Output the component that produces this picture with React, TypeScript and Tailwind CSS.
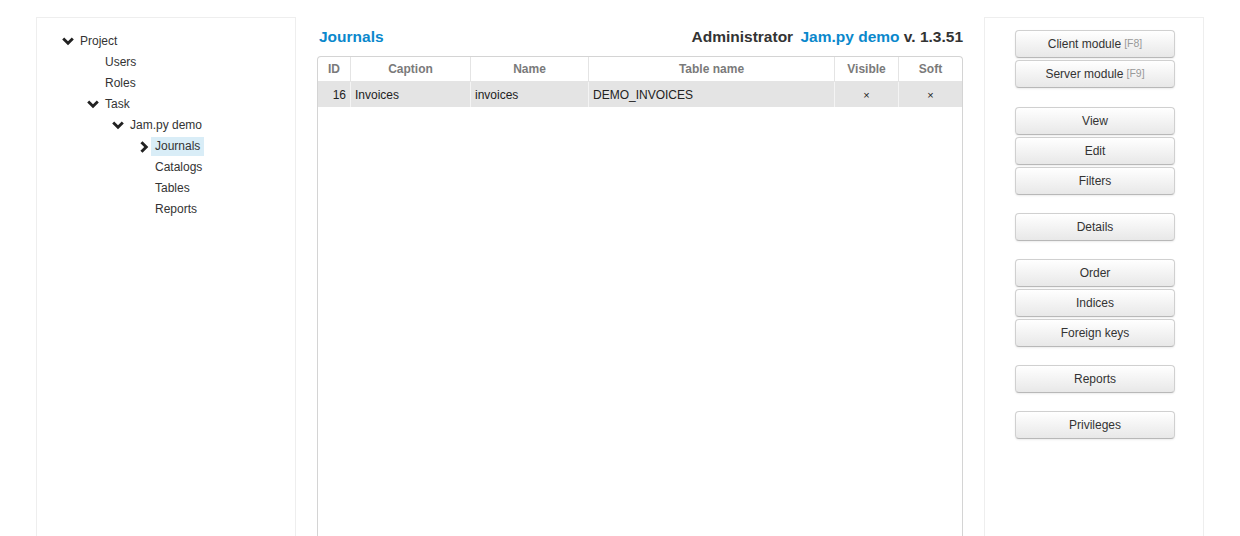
import React from "react";

const ChevronDown = () => (
  <svg width="12" height="9" viewBox="0 0 12 9" className="shrink-0">
    <path d="M0.2 2.5 L2.2 0.4 L6 4.2 L9.8 0.4 L11.8 2.5 L6 8.3 Z" fill="#222" />
  </svg>
);

const ChevronRight = () => (
  <svg width="9" height="12" viewBox="0 0 9 12" className="shrink-0">
    <path d="M2.5 0.2 L0.4 2.2 L4.2 6 L0.4 9.8 L2.5 11.8 L8.3 6 Z" fill="#222" />
  </svg>
);

type Node = { label: string; level: number; icon?: "down" | "right"; active?: boolean };

const tree: Node[] = [
  { label: "Project", level: 0, icon: "down" },
  { label: "Users", level: 1 },
  { label: "Roles", level: 1 },
  { label: "Task", level: 1, icon: "down" },
  { label: "Jam.py demo", level: 2, icon: "down" },
  { label: "Journals", level: 3, icon: "right", active: true },
  { label: "Catalogs", level: 3 },
  { label: "Tables", level: 3 },
  { label: "Reports", level: 3 },
];

const pad: Record<number, string> = {
  0: "pl-[25px]",
  1: "pl-[50px]",
  2: "pl-[75px]",
  3: "pl-[100px]",
};

const TreeRow = ({ node }: { node: Node }) => (
  <div className={`flex items-center h-[21px] ${pad[node.level]}`}>
    <div className="w-[14px] flex items-center">
      {node.icon === "down" && <ChevronDown />}
      {node.icon === "right" && <span className="pl-[3px] flex"><ChevronRight /></span>}
    </div>
    <span className={`leading-[19px] px-[4px] ${node.active ? "bg-[#d9edf7]" : ""}`}>
      {node.label}
    </span>
  </div>
);

const groups: { label: string; key?: string }[][] = [
  [
    { label: "Client module", key: "[F8]" },
    { label: "Server module", key: "[F9]" },
  ],
  [{ label: "View" }, { label: "Edit" }, { label: "Filters" }],
  [{ label: "Details" }],
  [{ label: "Order" }, { label: "Indices" }, { label: "Foreign keys" }],
  [{ label: "Reports" }],
  [{ label: "Privileges" }],
];

const Btn = ({ label, hint }: { label: string; hint?: string }) => (
  <button className="w-[160px] h-[28px] rounded-[4px] border border-[#d0d0d0] border-b-[#b8b8b8] bg-gradient-to-b from-white to-[#e8e8e8] shadow-[0_1px_2px_rgba(0,0,0,0.08)] text-[12px] text-[#333] flex items-center justify-center gap-[3px]">
    {label}
    {hint && <span className="text-[10.5px] text-[#999]">{hint}</span>}
  </button>
);

const cols = [
  { name: "ID", w: "w-[33px]" },
  { name: "Caption", w: "w-[120px]" },
  { name: "Name", w: "w-[118px]" },
  { name: "Table name", w: "w-[246px]" },
  { name: "Visible", w: "w-[64px]" },
  { name: "Soft", w: "flex-1" },
];

export default function App() {
  return (
    <div
      className="w-[1240px] h-[536px] overflow-hidden bg-white text-[12px] text-[#333] flex px-[36px] pt-[17px] gap-[21px]"
      style={{ fontFamily: '"Liberation Sans", Arial, sans-serif' }}
    >
      <div className="w-[260px] h-[540px] border border-[#eeeeee] pt-[13px] shrink-0">
        {tree.map((n) => (
          <TreeRow key={n.label + n.level} node={n} />
        ))}
      </div>

      <div className="w-[646px] shrink-0 flex flex-col">
        <div className="flex items-center justify-between h-[41px] pl-[2px]">
          <span className="text-[15.5px] font-bold text-[#0a88cc]">Journals</span>
          <span className="text-[15.5px] font-bold text-[#333]">
            Administrator <span className="text-[#0a88cc] ml-[3px]">Jam.py demo</span> v. 1.3.51
          </span>
        </div>
        <div className="h-[500px] border border-[#d4d4d4] rounded-t-[4px] border-b-0">
          <div className="flex h-[25px] border-b border-[#e4e4e4] text-[#7a7a7a] font-bold text-[12px]">
            {cols.map((c, i) => (
              <div
                key={c.name}
                className={`${c.w} flex items-center justify-center ${i < cols.length - 1 ? "border-r border-[#e4e4e4]" : ""}`}
              >
                {c.name}
              </div>
            ))}
          </div>
          <div className="flex h-[25px] bg-[#e4e4e4] text-[#222]">
            <div className="w-[33px] border-r border-[#f4f4f4] flex items-center justify-end pr-[4px]">16</div>
            <div className="w-[120px] border-r border-[#f4f4f4] flex items-center pl-[4px]">Invoices</div>
            <div className="w-[118px] border-r border-[#f4f4f4] flex items-center pl-[4px]">invoices</div>
            <div className="w-[246px] border-r border-[#f4f4f4] flex items-center pl-[4px]">DEMO_INVOICES</div>
            <div className="w-[64px] border-r border-[#f4f4f4] flex items-center justify-center text-[11px]">×</div>
            <div className="flex-1 flex items-center justify-center text-[11px]">×</div>
          </div>
        </div>
      </div>

      <div className="w-[220px] h-[540px] border border-[#eeeeee] shrink-0 pt-[12px] pl-[2px] flex flex-col items-center gap-[18px]">
        {groups.map((g, i) => (
          <div key={i} className={`flex flex-col gap-[2px] ${i === 1 ? "mt-[1px]" : ""}`}>
            {g.map((b) => (
              <Btn key={b.label} label={b.label} hint={b.key} />
            ))}
          </div>
        ))}
      </div>
    </div>
  );
}
